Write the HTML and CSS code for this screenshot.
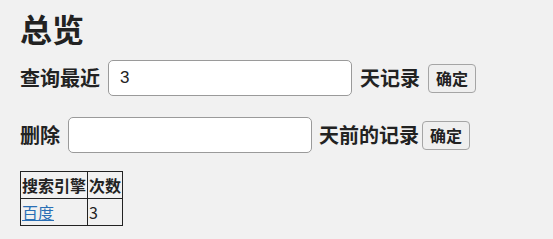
FILE: index.html
```html
<!doctype html>
<html lang="zh-CN">

<head>
    <meta charset="utf-8">
    <title>总览</title>
    <link rel="stylesheet" href="styles.css">
</head>

<body>
<div class="wrap">
    <h1 class="title">总览</h1>

    <form class="row" onsubmit="return false;">
        <span class="label">查询最近</span>
        <input class="input" type="text" name="days" value="3">
        <span class="label after">天记录</span>
        <button class="btn" type="submit">确定</button>
    </form>

    <form class="row second" onsubmit="return false;">
        <span class="label">删除</span>
        <input class="input" type="text" name="del_days" value="">
        <span class="label after tight">天前的记录</span>
        <button class="btn" type="submit">确定</button>
    </form>

    <table class="stats">
        <tr>
            <th>搜索引擎</th>
            <th>次数</th>
        </tr>
        <tr>
            <td><a href="#">百度</a></td>
            <td>3</td>
        </tr>
    </table>
</div>
</body>

</html>
```

FILE: styles.css
```css
body {
    margin: 0;
    background: #f1f1f1;
    color: #222;
    font-family: "Noto Sans CJK SC", "Liberation Sans", sans-serif;
}

.wrap {
    padding: 0 20px;
}

.title {
    font-size: 32px;
    font-weight: bold;
    line-height: 38px;
    margin: 0;
    padding-top: 9px;
}

.row {
    display: flex;
    align-items: center;
    margin-top: 13px;
}

.row.second {
    margin-top: 21px;
}

.label {
    font-size: 20px;
    font-weight: bold;
    line-height: 28px;
    margin-right: 8px;
}

.label.after {
    margin-left: 8px;
}

.label.tight {
    margin-left: 7px;
    margin-right: 3px;
}

.input {
    box-sizing: border-box;
    width: 244px;
    height: 36px;
    padding: 0 11px;
    border: 1px solid #9a9a9a;
    border-radius: 5px;
    background: #fff;
    font-family: "Liberation Sans", sans-serif;
    font-size: 17px;
    color: #222;
}

.btn {
    box-sizing: border-box;
    width: 48px;
    height: 29px;
    padding: 0;
    border: 1px solid #a5a5a5;
    border-radius: 4px;
    background: #efefef;
    font-family: "Noto Sans CJK SC", sans-serif;
    font-size: 16px;
    font-weight: bold;
    color: #222;
}

.stats {
    margin-top: 18px;
    border-collapse: collapse;
    font-size: 16px;
}

.stats th,
.stats td {
    border: 1px solid #222;
    padding: 0 1px;
    text-align: left;
    line-height: 26px;
}

.stats a {
    color: #2a6fb5;
}
```
